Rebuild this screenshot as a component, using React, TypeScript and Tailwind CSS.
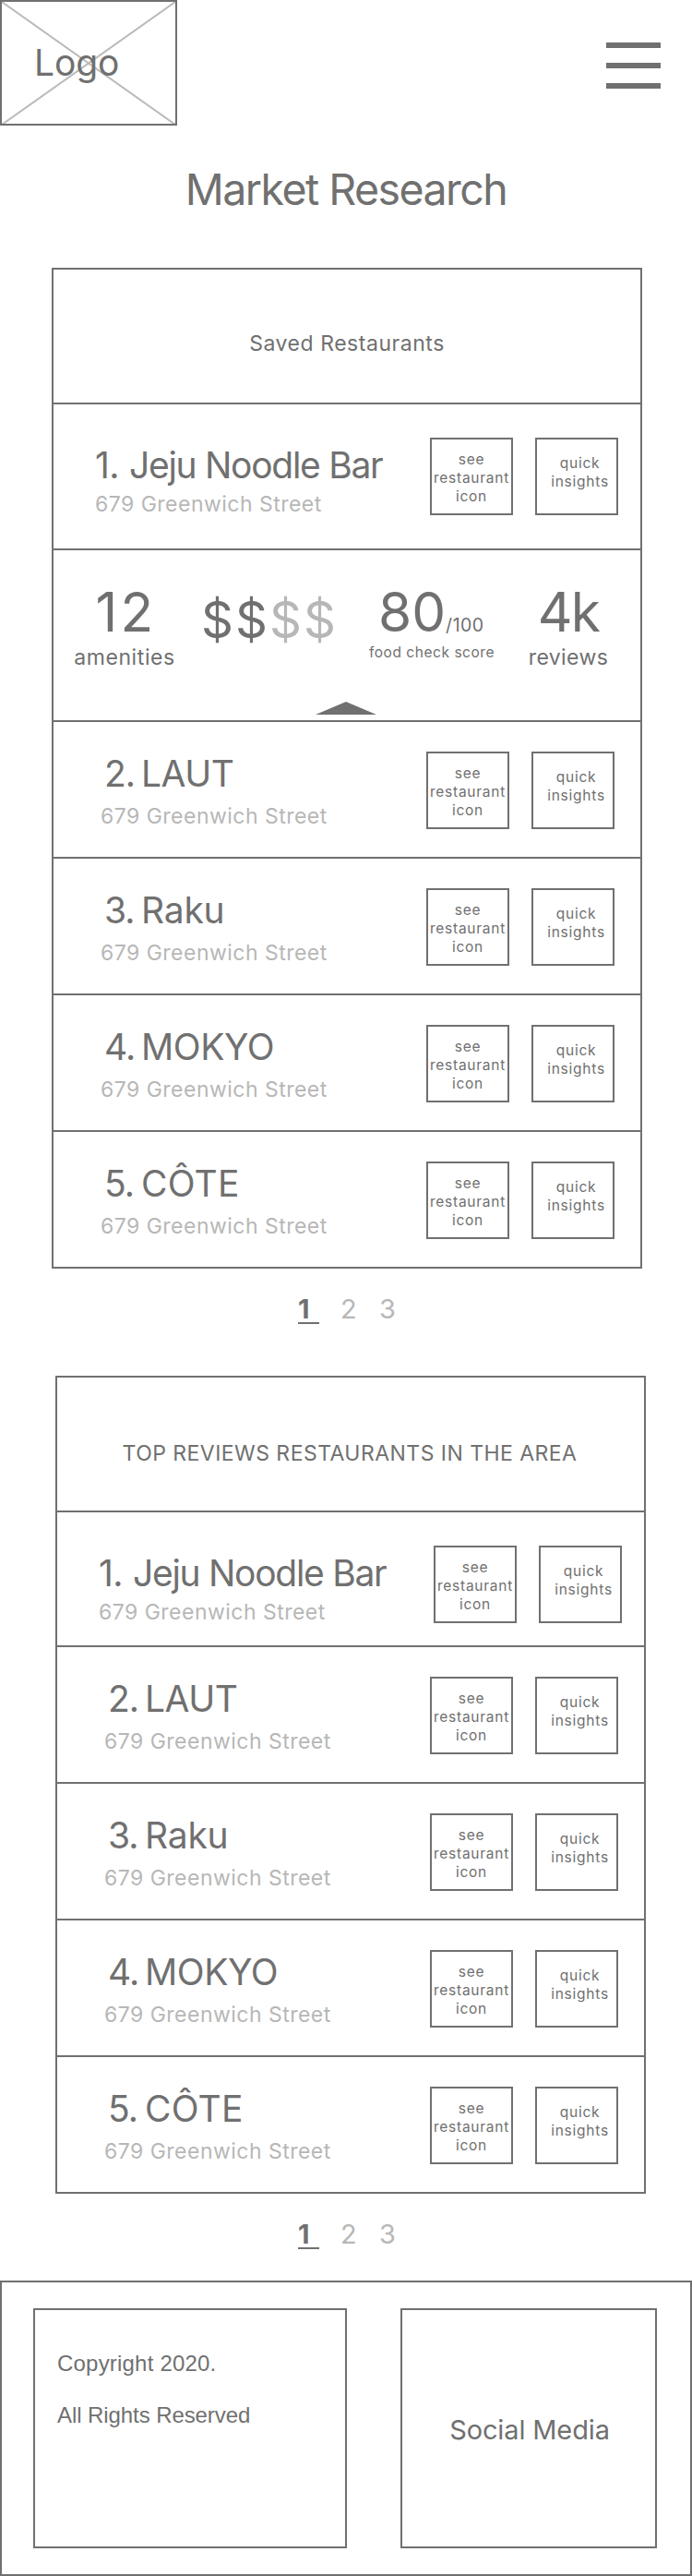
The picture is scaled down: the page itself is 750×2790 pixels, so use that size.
type Restaurant = { no: string; name: string; spacing: string };

const first: Restaurant = { no: "1.", name: "Jeju Noodle Bar", spacing: "tracking-[-1.29px]" };

const others: Restaurant[] = [
  { no: "2.", name: "LAUT", spacing: "tracking-[-0.5px]" },
  { no: "3.", name: "Raku", spacing: "tracking-[-0.2px]" },
  { no: "4.", name: "MOKYO", spacing: "tracking-[-0.4px]" },
  { no: "5.", name: "CÔTE", spacing: "tracking-[0.2px]" },
];

function Actions() {
  return (
    <div className="flex gap-6 text-center text-[15.5px] leading-5 tracking-[0.75px]">
      <button className="flex h-[84px] w-[90px] flex-col items-center border-2 border-[#707070] pt-3">
        <span>see</span>
        <span>restaurant</span>
        <span>icon</span>
      </button>
      <button className="flex h-[84px] w-[90px] flex-col items-center border-2 border-[#707070] pt-4 pl-[7px]">
        <span>quick</span>
        <span>insights</span>
      </button>
    </div>
  );
}

function FeaturedRow({ className }: { className: string }) {
  return (
    <div className={`flex items-start justify-between border-b-2 border-[#707070] pr-6 ${className}`}>
      <div className="pt-[46px] pl-[45px]">
        <div className="flex text-[39px] leading-10">
          <span className="w-[37px] tracking-[-0.5px]">{first.no}</span>
          <span className={first.spacing}>{first.name}</span>
        </div>
        <p className="mt-[7px] text-[23px] leading-[30px] tracking-[0.48px] text-[#b7b7b7]">679 Greenwich Street</p>
      </div>
      <div className="pt-9">
        <Actions />
      </div>
    </div>
  );
}

function Row({ item }: { item: Restaurant }) {
  return (
    <div className="flex h-[148px] items-start justify-between border-b-2 border-[#707070] pr-7">
      <div className="pt-9 pl-[51px]">
        <div className="flex pl-1 text-[39px] leading-10">
          <span className="w-10 tracking-[-1px]">{item.no}</span>
          <span className={item.spacing}>{item.name}</span>
        </div>
        <p className="mt-[11px] text-[23px] leading-[30px] tracking-[0.48px] text-[#b7b7b7]">679 Greenwich Street</p>
      </div>
      <div className="pt-8">
        <Actions />
      </div>
    </div>
  );
}

function Stats() {
  return (
    <div className="h-[186px] border-b-2 border-[#707070]">
      <div className="flex h-[164px]">
        <div className="w-[154px] pt-[37px] text-center">
          <p className="pl-[3px] text-[58.5px] leading-[60px] tracking-[3.2px]">12</p>
          <p className="mt-1 text-[23px] leading-[30px] tracking-[0.6px]">amenities</p>
        </div>
        <p className="ml-1.5 w-[148px] pt-[45px] text-[54.5px] leading-[60px] tracking-[2px]">
          $$<span className="text-[#b7b7b7]">$$</span>
        </p>
        <div className="ml-8 w-[140px] pt-[37px]">
          <p className="flex items-baseline pl-3 text-[58.5px] leading-[60px]">
            80<span className="text-[19.5px] leading-5 tracking-[0.5px]">/100</span>
          </p>
          <p className="mt-[3.5px] text-center text-[15.5px] leading-5 tracking-[0.54px] whitespace-nowrap">
            food check score
          </p>
        </div>
        <div className="w-[156px] pt-[37px] text-center">
          <p className="text-[58.5px] leading-[60px] tracking-[-1.8px]">4k</p>
          <p className="mt-1 text-[23px] leading-[30px] tracking-[0.41px]">reviews</p>
        </div>
      </div>
      <svg className="ml-[284px] block" width="66" height="14" viewBox="0 0 66 14">
        <path d="M33 0L66 14H0Z" fill="#707070" />
      </svg>
    </div>
  );
}

function Pagination({ className }: { className: string }) {
  return (
    <nav className={`flex pl-[323px] text-[29px] leading-[39px] text-[#b7b7b7] ${className}`}>
      <span className="h-9 w-[23px] border-b-2 border-[#707070] font-bold text-[#707070]">1</span>
      <span className="ml-[23px] h-9 w-[42px]">2</span>
      <span className="h-9">3</span>
    </nav>
  );
}

export default function App() {
  return (
    <div className="h-[2790px] w-[750px] overflow-hidden bg-white font-['Inter',sans-serif] text-[#707070]">
      <header className="flex h-[136px] items-start justify-between pr-[34px]">
        <div className="relative h-[136px] w-[192px] border-2 border-[#707070] pt-[42px] pl-[35px]">
          <svg className="absolute inset-0" width="188" height="132" viewBox="0 0 188 132">
            <path d="M0 0L188 133M188 0L0 133" stroke="#bbbbbb" strokeWidth="2" />
          </svg>
          <span className="relative block text-[39px] leading-[48px] tracking-[-0.12px]">Logo</span>
        </div>
        <button className="flex flex-col gap-4 pt-[46px]" aria-label="Menu">
          <span className="h-1.5 w-[59px] bg-[#707070]" />
          <span className="h-1.5 w-[59px] bg-[#707070]" />
          <span className="h-1.5 w-[59px] bg-[#707070]" />
        </button>
      </header>

      <h1 className="mt-[39px] text-center text-[46.5px] leading-[60px] tracking-[-1.54px]">Market Research</h1>

      <section className="mt-[55px] ml-14 w-[640px] border-x-2 border-t-2 border-[#707070]">
        <h2 className="h-[146px] border-b-2 border-[#707070] pt-[65px] text-center text-[23px] leading-[30px] tracking-[0.54px]">
          Saved Restaurants
        </h2>
        <FeaturedRow className="h-[158px]" />
        <Stats />
        {others.map((item) => (
          <Row key={item.no} item={item} />
        ))}
      </section>
      <Pagination className="mt-6" />

      <section className="mt-14 ml-[60px] w-[640px] border-x-2 border-t-2 border-[#707070]">
        <h2 className="h-[146px] border-b-2 border-[#707070] pt-[67px] pr-0.5 text-center text-[23px] leading-[30px] tracking-[0.46px]">
          TOP REVIEWS RESTAURANTS IN THE AREA
        </h2>
        <FeaturedRow className="h-[146px]" />
        {others.map((item) => (
          <Row key={item.no} item={item} />
        ))}
      </section>
      <Pagination className="mt-6" />

      <footer className="mt-[34px] flex h-[320px] gap-[58px] border-2 border-[#707070] pt-7 pl-[34px]">
        <div className="h-[260px] w-[340px] border-2 border-[#707070] pt-[30px] pl-6 font-['Liberation_Sans',sans-serif] text-[24px] leading-[56px]">
          <p className="tracking-[0.2px]">Copyright 2020.</p>
          <p className="tracking-[-0.08px]">All Rights Reserved</p>
        </div>
        <div className="flex h-[260px] w-[278px] items-center justify-center border-2 border-[#707070] pt-[3px] pl-0.5 text-[29px] leading-10 tracking-[-0.13px]">
          Social Media
        </div>
      </footer>
    </div>
  );
}
